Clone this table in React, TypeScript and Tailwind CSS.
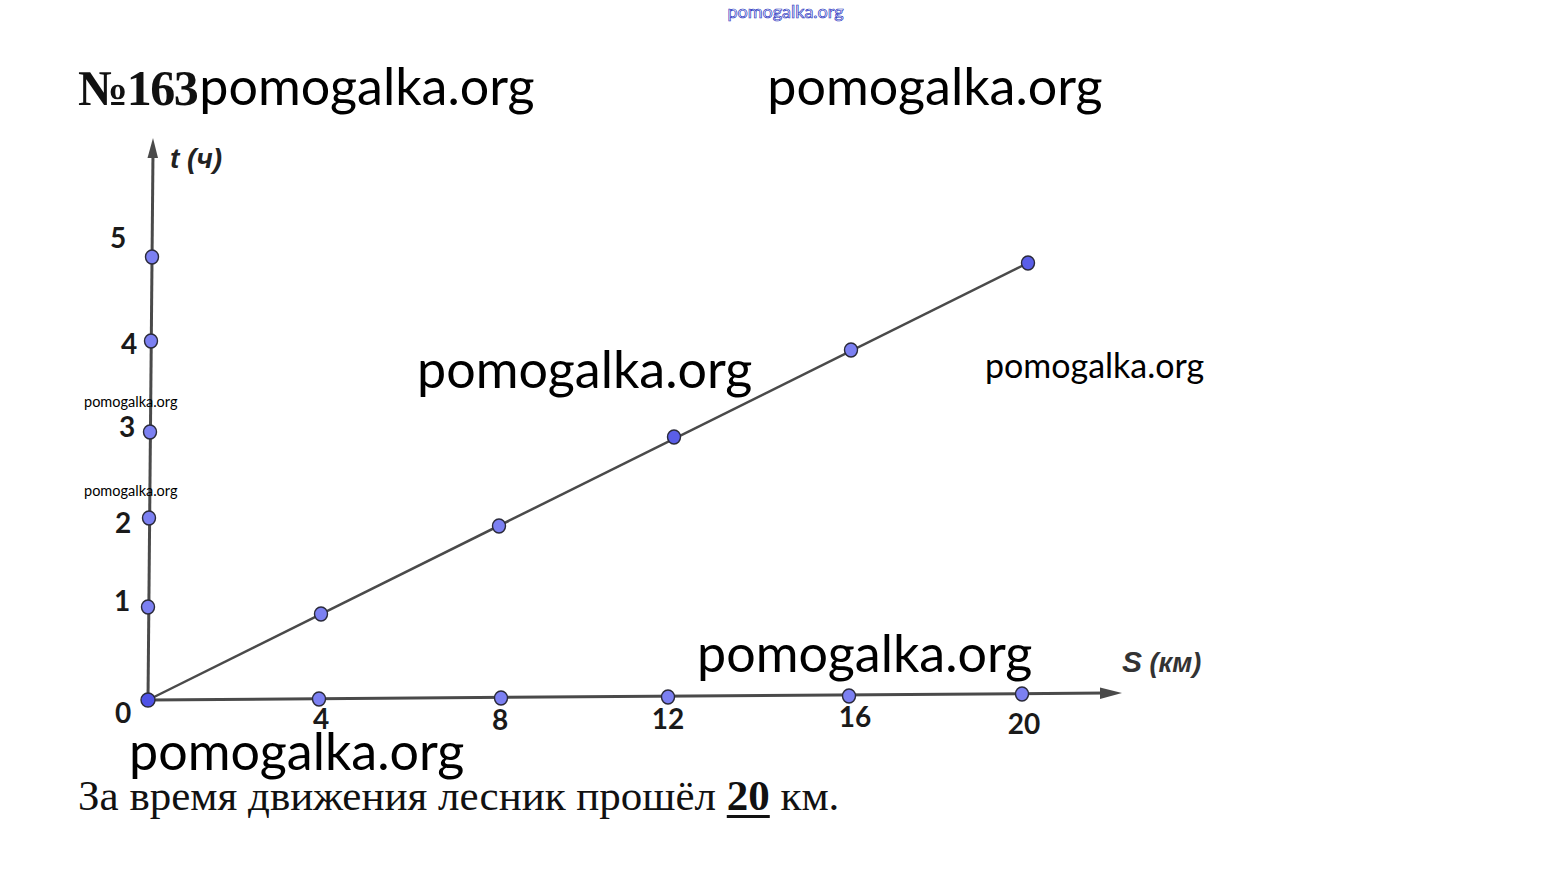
import React from "react";

const yPoints = [
  { x: 152, y: 257, label: "5", lx: 118, ly: 248 },
  { x: 151, y: 341, label: "4", lx: 129, ly: 354 },
  { x: 150, y: 432, label: "3", lx: 127, ly: 437 },
  { x: 149, y: 518, label: "2", lx: 123, ly: 533 },
  { x: 148, y: 607, label: "1", lx: 122, ly: 611 },
];

const xPoints = [
  { x: 319, y: 699, label: "4", lx: 321, ly: 729 },
  { x: 501, y: 698, label: "8", lx: 500, ly: 730 },
  { x: 668, y: 697, label: "12", lx: 668, ly: 729 },
  { x: 849, y: 696, label: "16", lx: 855, ly: 727 },
  { x: 1022, y: 694, label: "20", lx: 1024, ly: 734 },
];

const linePoints = [
  { x: 321, y: 614, dark: false },
  { x: 499, y: 526, dark: false },
  { x: 674, y: 437, dark: true },
  { x: 851, y: 350, dark: false },
  { x: 1028, y: 263, dark: true },
];

const Dot = ({ x, y, dark }: any) => (
  <ellipse cx={x} cy={y} rx={6.5} ry={7} fill={dark ? "#5a5ee8" : "#7c80f2"} stroke="#2a2a3a" strokeWidth={1.4} />
);

const Chart = () => {
  const labelFont = "Lato, 'Liberation Sans', sans-serif";
  const axisFont = "'Liberation Sans', Arial, sans-serif";
  return (
    <svg width={1568} height={620} viewBox="0 130 1568 620" className="block">
      {/* оси */}
      <line x1={148} y1={700} x2={153} y2={152} stroke="#4a4a4a" strokeWidth={3} />
      <polygon points="153,138 147.5,158 158,158" fill="#4a4a4a" />
      <line x1={148} y1={700} x2={1106} y2={693} stroke="#4a4a4a" strokeWidth={3} />
      <polygon points="1122,693 1100,687.5 1100,699" fill="#4a4a4a" />
      {/* график движения */}
      <line x1={148} y1={700} x2={1028} y2={263} stroke="#4a4a4a" strokeWidth={2.5} />

      <text x={170} y={168} fontFamily={axisFont} fontStyle="italic" fontWeight="bold" fontSize={28} fill="#222">
        t (ч)
      </text>
      <text x={1122} y={672} fontFamily={axisFont} fontStyle="italic" fontWeight="bold" fontSize={30} fill="#333">
        S<tspan fontSize={27}> (км)</tspan>
      </text>

      {yPoints.map((p) => (
        <g key={"y" + p.label}>
          <text x={p.lx} y={p.ly} textAnchor="middle" fontFamily={labelFont} fontWeight="bold" fontSize={28} fill="#1a1a1a">
            {p.label}
          </text>
          <Dot x={p.x} y={p.y} />
        </g>
      ))}
      {xPoints.map((p) => (
        <g key={"x" + p.label}>
          <text x={p.lx} y={p.ly} textAnchor="middle" fontFamily={labelFont} fontWeight="bold" fontSize={28} fill="#1a1a1a">
            {p.label}
          </text>
          <Dot x={p.x} y={p.y} />
        </g>
      ))}
      {linePoints.map((p, i) => (
        <Dot key={"l" + i} x={p.x} y={p.y} dark={p.dark} />
      ))}
      <text x={123} y={723} textAnchor="middle" fontFamily={labelFont} fontWeight="bold" fontSize={28} fill="#1a1a1a">
        0
      </text>
      <ellipse cx={148} cy={700} rx={7} ry={7} fill="#4f52e6" stroke="#2a2a3a" strokeWidth={1.4} />
    </svg>
  );
};

const App = () => {
  const mark = "font-['Lato','Open_Sans',sans-serif] text-black leading-none whitespace-nowrap";
  return (
    <div className="relative w-full h-[880px] bg-white overflow-hidden">
      <div className="flex justify-center pt-[1px] pl-[3px]">
        <span className="font-['Lato',sans-serif] text-[18px] leading-[20px] text-white [-webkit-text-stroke:0.7px_#2430c0]">
          pomogalka.org
        </span>
      </div>
      <div className="h-[109px] pt-[38px] pl-[78px]">
        <div className="flex items-baseline">
          <h1 className="font-['Liberation_Serif','Times_New_Roman',serif] font-bold text-[50px] leading-[52px] text-[#111] tracking-[-1.5px]">
            №163
          </h1>
          <span className={mark + " text-[52px] leading-[52px] w-[568px] ml-[2px]"}>pomogalka.org</span>
          <span className={mark + " text-[52px] leading-[52px]"}>pomogalka.org</span>
        </div>
      </div>

      <Chart />

      <p className="pl-[78px] mt-[22px] font-['Liberation_Serif','Times_New_Roman',serif] text-[43px] leading-[48px] text-[#111]">
        За время движения лесник прошёл{" "}
        <span className="font-bold underline decoration-[3px] underline-offset-[5px]">20</span> км.
      </p>

      {/* водяные знаки поверх графика */}
      <span className={mark + " absolute left-[417px] top-[342px] text-[52px]"}>pomogalka.org</span>
      <span className={mark + " absolute left-[985px] top-[348px] text-[34px]"}>pomogalka.org</span>
      <span className={mark + " absolute left-[84px] top-[395px] text-[14.5px]"}>pomogalka.org</span>
      <span className={mark + " absolute left-[84px] top-[484px] text-[14.5px]"}>pomogalka.org</span>
      <span className={mark + " absolute left-[697px] top-[626px] text-[52px]"}>pomogalka.org</span>
      <span className={mark + " absolute left-[129px] top-[724px] text-[52px]"}>pomogalka.org</span>
    </div>
  );
};

export default App;
